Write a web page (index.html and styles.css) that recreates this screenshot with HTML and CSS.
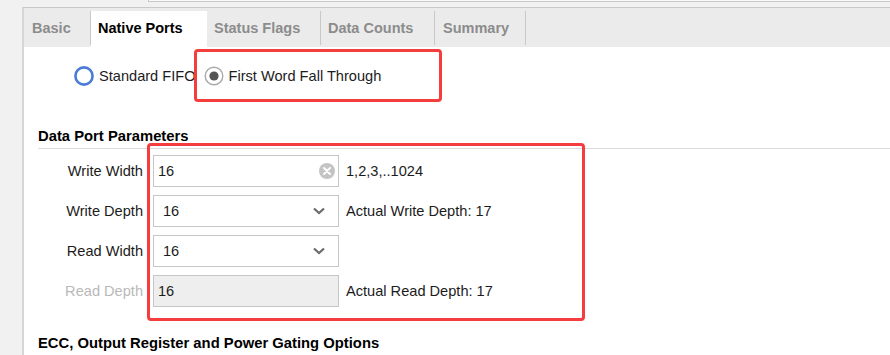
FILE: index.html
```html
<!DOCTYPE html>
<html lang="en">
<head>
    <meta charset="UTF-8">
    <meta name="viewport" content="width=device-width, initial-scale=1.0">
    <title>FIFO Generator - Native Ports</title>
    <link rel="stylesheet" href="styles.css">
  </head>
  <body>
    <div class="topbar"></div>

    <div class="panel">
      <div class="tabs">
        <div class="tab tab-basic">Basic</div>
        <div class="tab tab-native active">Native Ports</div>
        <div class="tab tab-status">Status Flags</div>
        <div class="tab tab-counts">Data Counts</div>
        <div class="tab tab-summary">Summary</div>
      </div>

      <div class="content">
        <div class="radio-row">
          <label class="radio">
            <svg width="20" height="20" viewBox="0 0 20 20"><circle cx="10" cy="10" r="8.6" fill="#fff" stroke="#4a7cd6" stroke-width="2.6"/></svg>
            Standard FIFO
          </label>
          <div class="mark mark-radio">
            <label class="radio">
              <svg width="20" height="20" viewBox="0 0 20 20"><circle cx="10" cy="10" r="8.8" fill="#fff" stroke="#a9a9a9" stroke-width="1.4"/><circle cx="10" cy="10" r="4.6" fill="#555"/></svg>
              First Word Fall Through
            </label>
          </div>
        </div>

        <h2 class="section">Data Port Parameters</h2>

        <div class="params">
          <div class="labels">
            <span>Write Width</span>
            <span>Write Depth</span>
            <span>Read Width</span>
            <span class="disabled">Read Depth</span>
          </div>
          <div class="mark mark-params">
            <div class="rows">
              <div class="field">
                <span>16</span>
                <svg width="16" height="16" viewBox="0 0 16 16"><circle cx="8" cy="8" r="8" fill="#c4c4c4"/><path d="M5 5 L11 11 M11 5 L5 11" stroke="#fff" stroke-width="2" stroke-linecap="round"/></svg>
              </div>
              <span class="hint">1,2,3,..1024</span>

              <div class="field select">
                <span>16</span>
                <svg width="12" height="8" viewBox="0 0 12 8"><path d="M1 1.5 L6 6 L11 1.5" fill="none" stroke="#6b6b6b" stroke-width="2.2"/></svg>
              </div>
              <span class="hint">Actual Write Depth: 17</span>

              <div class="field select">
                <span>16</span>
                <svg width="12" height="8" viewBox="0 0 12 8"><path d="M1 1.5 L6 6 L11 1.5" fill="none" stroke="#6b6b6b" stroke-width="2.2"/></svg>
              </div>
              <span class="hint"></span>

              <div class="field readonly">
                <span>16</span>
              </div>
              <span class="hint">Actual Read Depth: 17</span>
            </div>
          </div>
        </div>

        <h2 class="section ecc">ECC, Output Register and Power Gating Options</h2>
      </div>
    </div>
  </body>
</html>
```

FILE: styles.css
```css
  body {
    margin: 0;
    height: 355px;
    overflow: hidden;
    background: #f1f1f1;
    font-family: 'Liberation Sans', Arial, sans-serif;
    font-size: 14.6px;
    color: #1c1c1c;
  }

  .topbar {
    margin-left: 148px;
    height: 1px;
    background: #fafafa;
    border-left: 1px solid #c8c8c8;
    border-bottom: 1px solid #c8c8c8;
  }

  .panel {
    margin-top: 5px;
    margin-left: 22px;
    height: 348px;
    background: #fff;
    border-top: 1px solid #c8c8c8;
    border-left: 2px solid #d6d6d6;
  }

  /* tab strip */
  .tabs {
    display: flex;
    align-items: flex-start;
    height: 39px;
    padding-top: 3px;
    box-sizing: border-box;
    background: #ebebeb;
  }

  .tab {
    height: 31px;
    padding: 3px 0 0 7px;
    box-sizing: content-box;
    line-height: 28px;
    font-size: 14.5px;
    font-weight: bold;
    color: #8c8c8c;
    border-right: 1px solid #c8c8c8;
    white-space: nowrap;
  }

  .tab-basic { width: 58px; padding-left: 8px; }
  .tab-native { width: 108px; }
  .tab-status { width: 106px; }
  .tab-counts { width: 106px; padding-left: 7px; }
  .tab-summary { width: 82px; padding-left: 8px; }

  .tab.active {
    height: 33px;
    color: #000;
    background: #fff;
    border-right-color: transparent;
  }

  /* red highlight boxes */
  .mark {
    border: 3px solid #f43d3d;
    border-radius: 4px;
    box-sizing: border-box;
  }

  .radio-row {
    display: flex;
    align-items: center;
    margin-top: 2px;
    padding-left: 50px;
  }

  .radio {
    display: flex;
    align-items: center;
    gap: 5px;
  }

  .mark-radio {
    display: flex;
    align-items: center;
    width: 248px;
    height: 53px;
    margin-left: -2px;
    padding-left: 7px;
  }

  .section {
    margin: 26px 0 0 14px;
    padding-bottom: 3px;
    font-size: 14.8px;
    line-height: 17px;
    font-weight: bold;
    color: #000;
    border-bottom: 1px solid #dcdcdc;
  }

  .section.ecc {
    margin-top: 14px;
  }

  .params {
    display: flex;
    gap: 4px;
    margin-top: -6px;
  }

  .labels {
    display: flex;
    flex-direction: column;
    gap: 8px;
    width: 119px;
    padding-top: 12px;
    text-align: right;
  }

  .labels span {
    line-height: 32px;
  }

  .labels .disabled {
    color: #b9b9b9;
  }

  .mark-params {
    width: 438px;
    padding: 9px 0 11px 3px;
  }

  .rows {
    display: grid;
    grid-template-columns: 186px auto;
    grid-auto-rows: 32px;
    column-gap: 7px;
    row-gap: 8px;
    align-items: center;
  }

  .field {
    display: flex;
    align-items: center;
    justify-content: space-between;
    height: 32px;
    padding: 0 3px 0 4px;
    border: 1px solid #c6c6c6;
    box-sizing: border-box;
    background: #fff;
  }

  .field.select {
    padding: 0 13px 0 9px;
  }

  .field.readonly {
    background: #eeeeee;
  }
```
